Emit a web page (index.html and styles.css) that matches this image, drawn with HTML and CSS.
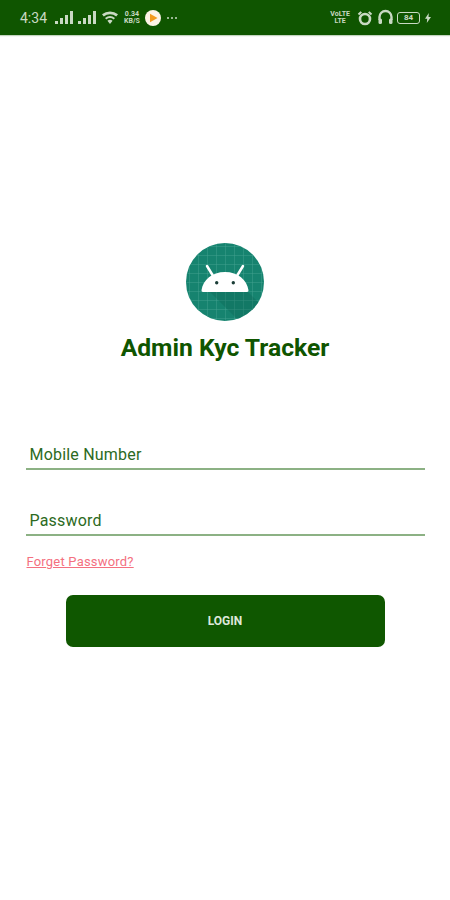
FILE: index.html
```html
<!DOCTYPE html>
<html lang="en">
<head>
  <meta charset="UTF-8">
  <meta name="viewport" content="width=device-width, initial-scale=1.0">
  <title>Admin Kyc Tracker</title>
  <link rel="stylesheet" href="styles.css">
</head>
<body>

  <div class="status-bar">
    <div class="status-left">
      <span class="clock">4:34</span>
      <svg width="20" height="13" viewBox="0 0 20 13"><path d="M0 10h3v3H0zM5 7h3v6H5zM10 4h3v9h-3zM15 0h3v13h-3z"/></svg>
      <svg width="20" height="13" viewBox="0 0 20 13"><path d="M0 10h3v3H0zM5 7h3v6H5zM10 4h3v9h-3zM15 0h3v13h-3z"/></svg>
      <svg class="wifi" width="18" height="13" viewBox="0 0 18 13"><path d="M9 13 6.400 9.800a4.200 4.200 0 0 1 5.200 0zM5.300 8.500 4 6.900a8 8 0 0 1 10 0L12.700 8.500a6 6 0 0 0-7.400 0zM2.800 5.400 1 3.300a12.500 12.500 0 0 1 16 0L15.200 5.400a10 10 0 0 0-12.400 0z"/></svg>
      <span class="speed">0.34<br>KB/S</span>
      <svg class="play" width="16" height="16" viewBox="0 0 16 16"><circle cx="8" cy="8" r="8" fill="#fdf3e6"/><path d="M5 3.800 12.500 8 5 12.200z" fill="#f39a1e"/></svg>
      <span class="more"><i></i><i></i><i></i></span>
    </div>
    <div class="status-right">
      <span class="speed lte">VoLTE<br>LTE</span>
      <svg width="16" height="16" viewBox="0 0 16 16"><circle cx="8" cy="9" r="5" fill="none" stroke="#c9d9c3" stroke-width="2.600"/><path d="M.8 3.800 3.500 1.200 5 2.600 2.200 5.200zM15.200 3.800 12.500 1.200 11 2.600 13.800 5.200z"/></svg>
      <svg class="headset" width="17" height="17" viewBox="0 0 17 17"><path d="M2.500 11V8a6 6 0 0 1 12 0v3" fill="none" stroke="#c9d9c3" stroke-width="2.400"/><rect x="1.500" y="9.500" width="3.500" height="5.500" rx="1.500"/><rect x="12" y="9.500" width="3.500" height="5.500" rx="1.500"/></svg>
      <span class="battery">84</span>
      <svg class="bolt" width="6" height="10" viewBox="0 0 6 10"><path d="M3.800 0 0 5.800h2.200L1.800 10 6 3.900H3.500z"/></svg>
    </div>
  </div>

  <div class="main-container">
    <svg class="logo" width="78" height="78" viewBox="0 0 78 78">
      <defs>
        <pattern id="grid" width="9" height="9" patternUnits="userSpaceOnUse" x="3" y="3">
          <path d="M0 0h9M0 0v9" fill="none" stroke="#3f9f8e" stroke-width="1"/>
        </pattern>
        <clipPath id="round"><circle cx="39" cy="39" r="39"/></clipPath>
      </defs>
      <circle cx="39" cy="39" r="39" fill="#16836f"/>
      <g clip-path="url(#round)">
        <rect width="78" height="78" fill="url(#grid)"/>
        <path d="M24 49H62L78 65V78H53z" fill="#0b5f50" opacity="0.3"/>
      </g>
      <path d="M17 49a1.500 1.500 0 0 1-1.500-1.700C17 37 26 29 39 29s22 8 23.500 18.300A1.500 1.500 0 0 1 61 49z" fill="#fff"/>
      <path d="M21 23l5.500 9M57 23l-5.500 9" stroke="#fff" stroke-width="2.500" stroke-linecap="round"/>
      <circle cx="30.700" cy="39.700" r="1.700" fill="#1a3d36"/>
      <circle cx="47.300" cy="39.700" r="1.700" fill="#1a3d36"/>
    </svg>
    <h1 class="app-title">Admin Kyc Tracker</h1>

    <div class="login-form">
      <div class="input-group first">Mobile Number</div>
      <div class="input-group second">Password</div>
      <a class="forget-link" href="#">Forget Password?</a>
      <button class="login-button">LOGIN</button>
    </div>
  </div>

</body>
</html>
```

FILE: styles.css
```css
body {
  margin: 0;
  font-family: Roboto, "Liberation Sans", sans-serif;
  background-color: #ffffff;
  height: 900px;
  overflow: hidden;
}

.status-bar {
  height: 35px;
  padding: 0 19px 0 20px;
  box-sizing: border-box;
  background-color: #0f5500;
  display: flex;
  align-items: center;
  justify-content: space-between;
  color: #c9d9c3;
  box-shadow: 0 1px 1px rgba(15, 85, 0, 0.25);
}

.status-bar svg {
  fill: #c9d9c3;
  display: block;
}

.status-left,
.status-right {
  display: flex;
  align-items: center;
}

.status-left {
  gap: 3px;
}

.status-right {
  gap: 3px;
}

.clock {
  font-size: 14px;
  margin-right: 5px;
}

.speed {
  font-size: 7px;
  line-height: 7px;
  font-weight: bold;
  text-align: center;
  margin: 0 2px;
}

.lte {
  margin: 0 4px 0 0;
}

.more {
  display: flex;
  gap: 2px;
  margin-left: 3px;
}

.more i {
  width: 2px;
  height: 2px;
  background-color: #c9d9c3;
  border-radius: 50%;
}

.headset {
  margin-left: 1px;
}

.battery {
  width: 23px;
  height: 12px;
  box-sizing: border-box;
  border: 1px solid #c9d9c3;
  border-radius: 3px;
  font-size: 8px;
  line-height: 10px;
  font-weight: bold;
  text-align: center;
}

.bolt {
  margin-left: 2px;
}

.main-container {
  display: flex;
  flex-direction: column;
  align-items: center;
  padding-top: 208px;
}

.logo {
  display: block;
}

.app-title {
  margin: 12px 0 0;
  font-size: 24.7px;
  line-height: 30px;
  font-weight: bold;
  color: #0f5500;
}

.login-form {
  width: 399px;
  margin-top: 80px;
  display: flex;
  flex-direction: column;
}

.input-group {
  height: 27px;
  padding: 2px 0 0 4px;
  box-sizing: border-box;
  border-bottom: 2px solid #8cb184;
  font-size: 16px;
  line-height: 20px;
  letter-spacing: 0.2px;
  color: #2c6a22;
}

.input-group.second {
  margin-top: 39px;
}

.forget-link {
  margin: 18px 0 0 1px;
  font-size: 13px;
  line-height: 16px;
  letter-spacing: 0.2px;
  color: #f4707f;
}

.login-button {
  width: 319px;
  height: 52px;
  margin: 25px 0 0 40px;
  background-color: #0f5700;
  color: #dde8d9;
  border: none;
  border-radius: 7px;
  font-family: inherit;
  font-size: 12px;
  font-weight: bold;
}
```
